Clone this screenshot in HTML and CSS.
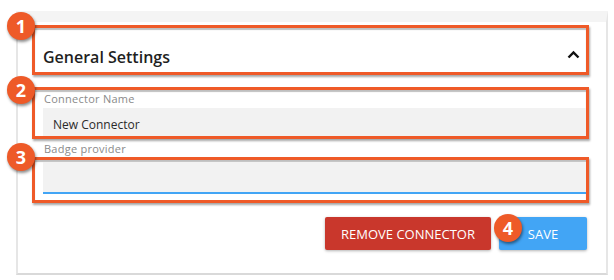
FILE: index.html
```html
<!DOCTYPE html>
<html>
<head>
<meta charset="utf-8">
<link rel="stylesheet" href="styles.css">
</head>
<body>
<div class="card">
  <div class="anno anno-header">
    <span class="badge b1">1</span>
    <div class="header">
      <span class="title">General Settings</span>
      <svg class="chevron" width="13" height="9" viewBox="0 0 13 9"><path d="M1.5 7.5 L6.5 2.5 L11.5 7.5" fill="none" stroke="#111" stroke-width="2.4"/></svg>
    </div>
  </div>
  <div class="anno anno-name">
    <span class="badge b2">2</span>
    <div class="label">Connector Name</div>
    <div class="input filled">New Connector</div>
  </div>
  <div class="label outside">Badge provider</div>
  <div class="anno anno-badge">
    <span class="badge b3">3</span>
    <div class="input focused"></div>
  </div>
  <div class="actions">
    <button class="btn remove">REMOVE CONNECTOR</button>
    <button class="btn save"><span class="badge b4">4</span>SAVE</button>
  </div>
</div>
</body>
</html>
```
FILE: styles.css
```css
html, body {
  margin: 0;
  padding: 0;
  background: #fff;
  font-family: "Open Sans", "Liberation Sans", sans-serif;
}
.card {
  margin: 11px 0 0 16px;
  width: 588px;
  border-top: 11px solid #f4f4f4;
  border-left: 2px solid #e6e6e6;
  border-right: 2px solid #e6e6e6;
  border-bottom: 2px solid #d9d9d9;
  background: #fff;
  padding-bottom: 23px;
}
.anno {
  position: relative;
  border: 3px solid #ef5a28;
  margin: 0 17px 0 14px;
  box-shadow: 1px 2px 2px rgba(0,0,0,0.35), inset 0 2px 1px rgba(0,0,0,0.25);
}
.anno-header { margin-top: 3px; }
.anno-name { margin-top: 12px; height: 46px; }
.anno-badge { margin-top: 2px; padding: 2px 0 6px 0; }
.header {
  display: flex;
  align-items: center;
  justify-content: space-between;
  padding: 18px 6px 4px 8px;
}
.title {
  font-size: 16px;
  line-height: 22px;
  font-weight: 600;
  color: #1f1f1f;
}
.chevron { display: block; margin-top: -6px; }
.label {
  font-size: 11px;
  line-height: 12px;
  letter-spacing: 0.25px;
  color: #8a8a8a;
  padding: 3px 0 0 9px;
}
.label.outside {
  margin: 4px 0 0 17px;
  padding: 0 0 0 9px;
}
.input {
  background: #f2f2f2;
  margin-left: 8px;
  box-sizing: border-box;
}
.input.filled {
  margin-top: 3px;
  height: 28px;
  font-size: 12px;
  line-height: 33px;
  color: #2a2a2a;
  padding-left: 10px;
}
.input.focused {
  height: 32px;
  border-bottom: 2px solid #42a5f5;
}
.actions {
  display: flex;
  justify-content: flex-end;
  gap: 8px;
  margin: 14px 19px 0 0;
}
.btn {
  position: relative;
  height: 33px;
  border: none;
  border-radius: 2px;
  color: #fff;
  font-family: "Open Sans", "Liberation Sans", sans-serif;
  font-size: 13px;
  padding: 0;
  box-shadow: 0 1px 3px rgba(0,0,0,0.3);
}
.remove { width: 166px; background: #c9372c; }
.save { width: 88px; background: #42a5f5; }
.badge {
  position: absolute;
  width: 28px;
  height: 28px;
  border-radius: 50%;
  background: #ee5a28;
  color: #fff;
  font-family: "Open Sans", "Liberation Sans", sans-serif;
  font-weight: 700;
  font-size: 18px;
  line-height: 28px;
  text-align: center;
  box-shadow: 1px 2px 3px rgba(0,0,0,0.45);
  z-index: 2;
}
.b1 { left: -28px; top: -16px; }
.b2 { left: -28px; top: -14px; }
.b3 { left: -28px; top: -17px; }
.b4 { left: -5px; top: -3px; }
```
